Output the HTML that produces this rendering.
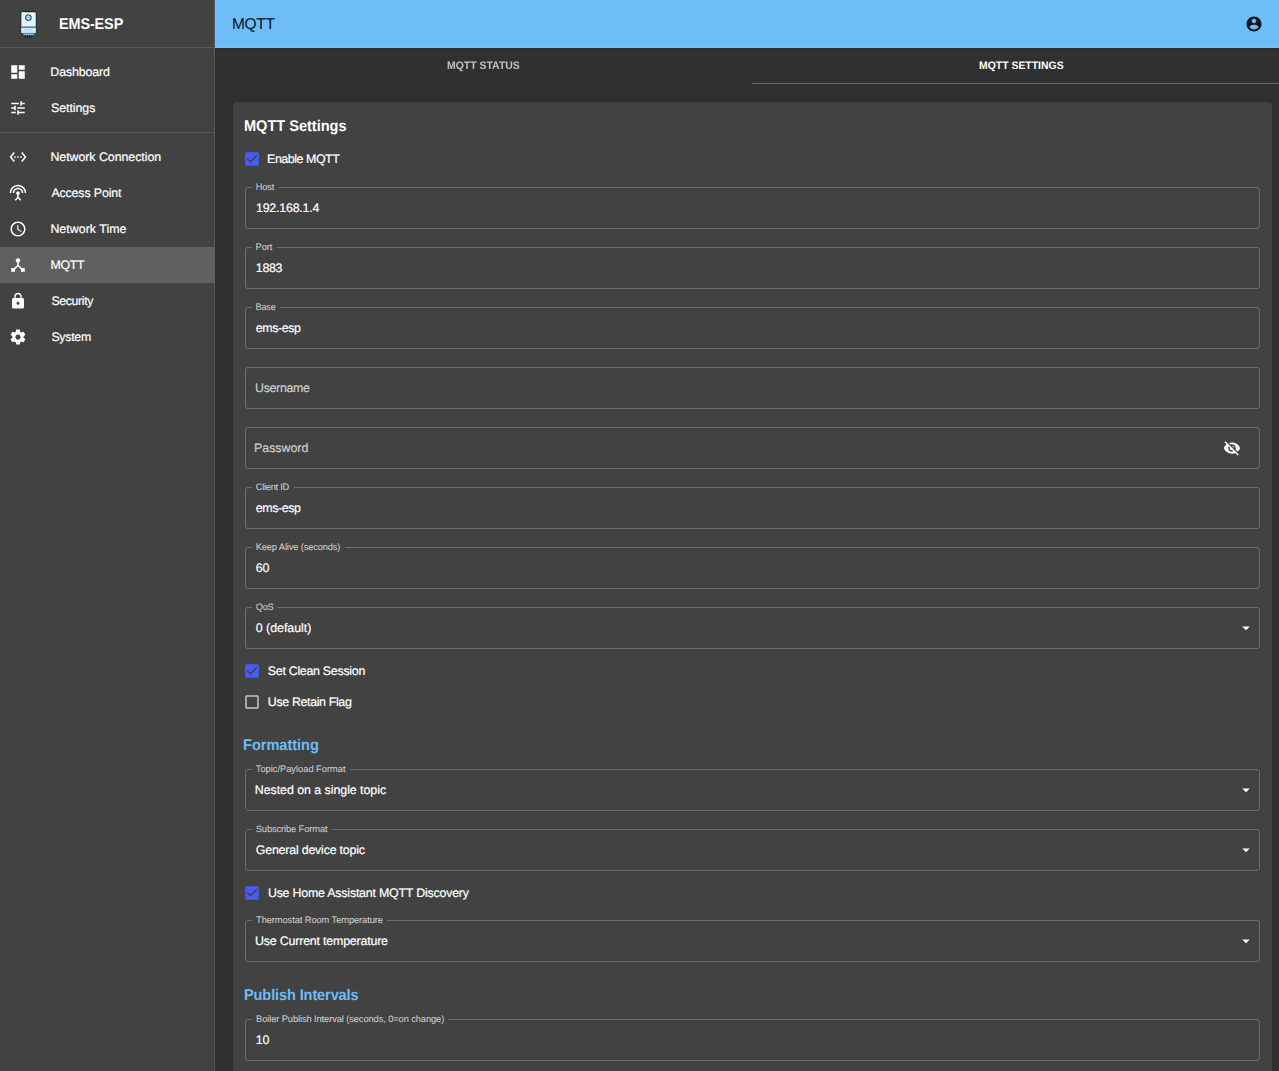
<!DOCTYPE html>
<html><head><meta charset="utf-8"><title>EMS-ESP MQTT</title>
<style>
html,body{margin:0;padding:0;}
body{width:1279px;height:1071px;overflow:hidden;position:relative;background:#303030;font-family:"Liberation Sans", sans-serif;}
.abs{position:absolute;}
.t{position:absolute;white-space:nowrap;line-height:1;text-rendering:geometricPrecision;}
.ic{position:absolute;display:block;}
.ol{position:absolute;left:245px;width:1015px;height:42px;box-sizing:border-box;border:1px solid #6d6d6d;border-radius:3px;}
.notch{position:absolute;top:-2px;height:4px;background:#424242;}
</style></head><body>

<div class="abs" style="left:0;top:0;width:214px;height:1071px;background:#424242;border-right:1px solid #595959;"></div>
<div class="abs" style="left:0;top:47px;width:214px;height:1px;background:#595959;"></div>
<div class="abs" style="left:0;top:132px;width:214px;height:1px;background:#595959;"></div>
<div class="abs" style="left:0;top:247px;width:215px;height:36px;background:#606060;"></div>
<svg class="abs" style="left:19px;top:10px;width:20px;height:30px" viewBox="0 0 20 30">
<path d="M1.8 3.2 Q1.8 1.6 3.5 1.5 L5.5 1.2 L6.5 1.6 L15.6 1.6 Q17.3 1.6 17.3 3.2 L17.3 22 Q17.3 23.6 15.6 23.6 L3.5 23.6 Q1.8 23.6 1.8 22 Z" fill="#e1f5fe" stroke="#1c252b" stroke-width="1.1"/>
<rect x="2.3" y="17.4" width="14.5" height="5.7" fill="#c6ecfc"/>
<line x1="1.8" y1="17.1" x2="17.3" y2="17.1" stroke="#1c252b" stroke-width="0.9"/>
<circle cx="9.4" cy="7.7" r="2.9" fill="#8cc3e6" stroke="#1c252b" stroke-width="0.9"/>
<path d="M10.6 7.0 A1.3 1.3 0 1 0 10.6 8.4 L9.6 8.4" fill="none" stroke="#e1f5fe" stroke-width="0.6"/>
<rect x="5.8" y="19.4" width="0.8" height="1.2" fill="#9ab"/><rect x="9.0" y="19.4" width="0.8" height="1.2" fill="#9ab"/><rect x="12.2" y="19.4" width="0.8" height="1.2" fill="#9ab"/>
<path d="M4 23.2 L15.5 23.2 Q15.5 25.2 13.5 25.2 L6 25.2 Q4 25.2 4 23.2Z" fill="#8cbfd8" stroke="#4f7f99" stroke-width="0.5"/>
<rect x="5.8" y="25.3" width="0.9" height="2.6" fill="#111"/><rect x="8.0" y="25.3" width="0.9" height="2.6" fill="#111"/><rect x="10.2" y="25.3" width="0.9" height="2.6" fill="#111"/><rect x="12.3" y="25.3" width="0.9" height="2.6" fill="#111"/>
</svg>
<div class="abs" style="left:215px;top:0;width:1064px;height:48px;background:#6ebcf8;"></div>
<div class="abs" style="left:215px;top:47px;width:1064px;height:1px;background:#71c3fc;"></div>
<div class="abs" style="left:215px;top:48px;width:1064px;height:1px;background:#2c2a28;"></div>
<div class="abs" style="left:752px;top:82.75px;width:538px;height:1.5px;background:#4a5af5;"></div>
<div class="abs" style="left:233px;top:102px;width:1039px;height:1100px;background:#424242;border-radius:3px;box-shadow:0 0 1.5px rgba(0,0,0,0.35);"></div>
<div class="ol" style="top:187.00px"><div class="notch" style="left:5.80px;width:27.20px"></div></div>
<div class="ol" style="top:247.00px"><div class="notch" style="left:5.80px;width:25.20px"></div></div>
<div class="ol" style="top:307.00px"><div class="notch" style="left:5.80px;width:28.30px"></div></div>
<div class="ol" style="top:367.00px"></div>
<div class="ol" style="top:427.00px"></div>
<div class="ol" style="top:487.00px"><div class="notch" style="left:5.80px;width:42.10px"></div></div>
<div class="ol" style="top:547.00px"><div class="notch" style="left:5.80px;width:93.40px"></div></div>
<div class="ol" style="top:607.00px"><div class="notch" style="left:5.80px;width:24.90px"></div></div>
<div class="ol" style="top:769.00px"><div class="notch" style="left:5.80px;width:98.50px"></div></div>
<div class="ol" style="top:829.00px"><div class="notch" style="left:5.80px;width:80.50px"></div></div>
<div class="ol" style="top:920.00px"><div class="notch" style="left:5.80px;width:135.50px"></div></div>
<div class="ol" style="top:1019.00px"><div class="notch" style="left:5.80px;width:196.70px"></div></div>
<svg class="ic" style="left:9px;top:63px;width:18px;height:18px" viewBox="0 0 24 24"><path fill="#fff" d="M3 13h8V3H3v10zm0 8h8v-6H3v6zm10 0h8V11h-8v10zm0-18v6h8V3h-8z"/></svg>
<svg class="ic" style="left:9px;top:99px;width:18px;height:18px" viewBox="0 0 24 24"><path fill="#fff" d="M3 17v2h6v-2H3zM3 5v2h10V5H3zm10 16v-2h8v-2h-8v-2h-2v6h2zM7 9v2H3v2h4v2h2V9H7zm14 4v-2H11v2h10zm-6-4h2V7h4V5h-4V3h-2v6z"/></svg>
<svg class="ic" style="left:9px;top:148px;width:18px;height:18px" viewBox="0 0 24 24"><path fill="#fff" d="M7.77 6.76L6.23 5.48.82 12l5.41 6.52 1.54-1.28L3.42 12l4.35-5.24zM7 13h2v-2H7v2zm10-2h-2v2h2v-2zm-6 2h2v-2h-2v2zm6.77-7.52l-1.54 1.28L20.58 12l-4.35 5.24 1.54 1.28L23.18 12l-5.41-6.52z"/></svg>
<svg class="ic" style="left:9px;top:184px;width:18px;height:18px" viewBox="0 0 24 24"><path fill="#fff" d="M12 5c-3.87 0-7 3.13-7 7h2c0-2.76 2.24-5 5-5s5 2.24 5 5h2c0-3.87-3.13-7-7-7zm1 9.29c.88-.39 1.5-1.26 1.5-2.29 0-1.38-1.12-2.5-2.5-2.5S9.5 10.62 9.5 12c0 1.02.62 1.9 1.5 2.29v3.3L7.59 21 9 22.41l3-3 3 3L16.41 21 13 17.59v-3.3zM12 1C5.93 1 1 5.93 1 12h2c0-4.97 4.03-9 9-9s9 4.03 9 9h2c0-6.07-4.93-11-11-11z"/></svg>
<svg class="ic" style="left:9px;top:220px;width:18px;height:18px" viewBox="0 0 24 24"><path fill="#fff" d="M11.99 2C6.47 2 2 6.48 2 12s4.47 10 9.99 10C17.52 22 22 17.52 22 12S17.52 2 11.99 2zM12 20c-4.42 0-8-3.58-8-8s3.58-8 8-8 8 3.58 8 8-3.58 8-8 8zm.5-13H11v6l5.25 3.15.75-1.23-4.5-2.67z"/></svg>
<svg class="ic" style="left:9px;top:256px;width:18px;height:18px" viewBox="0 0 24 24"><path fill="#fff" d="M17 16l-4-4V8.82C14.16 8.4 15 7.3 15 6c0-1.66-1.34-3-3-3S9 4.34 9 6c0 1.3.84 2.4 2 2.82V12l-4 4H3v5h5v-3.05l4-4.2 4 4.2V21h5v-5h-4z"/></svg>
<svg class="ic" style="left:9px;top:292px;width:18px;height:18px" viewBox="0 0 24 24"><path fill="#fff" d="M18 8h-1V6c0-2.76-2.24-5-5-5S7 3.24 7 6v2H6c-1.1 0-2 .9-2 2v10c0 1.1.9 2 2 2h12c1.1 0 2-.9 2-2V10c0-1.1-.9-2-2-2zm-6 9c-1.1 0-2-.9-2-2s.9-2 2-2 2 .9 2 2-.9 2-2 2zm3.1-9H8.9V6c0-1.71 1.39-3.1 3.1-3.1 1.71 0 3.1 1.39 3.1 3.1v2z"/></svg>
<svg class="ic" style="left:9px;top:328px;width:18px;height:18px" viewBox="0 0 24 24"><path fill="#fff" d="M19.43 12.98c.04-.32.07-.64.07-.98s-.03-.66-.07-.98l2.11-1.65c.19-.15.24-.42.12-.64l-2-3.46c-.12-.22-.39-.3-.61-.22l-2.49 1c-.52-.4-1.08-.73-1.69-.98l-.38-2.65C14.46 2.18 14.25 2 14 2h-4c-.25 0-.46.18-.49.42l-.38 2.65c-.61.25-1.17.59-1.69.98l-2.49-1c-.23-.09-.49 0-.61.22l-2 3.46c-.13.22-.07.49.12.64l2.11 1.65c-.04.32-.07.65-.07.98s.03.66.07.98l-2.11 1.65c-.19.15-.24.42-.12.64l2 3.46c.12.22.39.3.61.22l2.49-1c.52.4 1.08.73 1.69.98l.38 2.65c.03.24.24.42.49.42h4c.25 0 .46-.18.49-.42l.38-2.65c.61-.25 1.17-.59 1.69-.98l2.49 1c.23.09.49 0 .61-.22l2-3.46c.12-.22.07-.49-.12-.64l-2.11-1.65zM12 15.5c-1.93 0-3.5-1.57-3.5-3.5s1.57-3.5 3.5-3.5 3.5 1.57 3.5 3.5-1.57 3.5-3.5 3.5z"/></svg>
<svg class="ic" style="left:1245px;top:14.8px;width:18px;height:18px" viewBox="0 0 24 24"><path fill="rgba(0,0,0,0.87)" d="M12 2C6.48 2 2 6.48 2 12s4.48 10 10 10 10-4.48 10-10S17.52 2 12 2zm0 3c1.66 0 3 1.34 3 3s-1.34 3-3 3-3-1.34-3-3 1.34-3 3-3zm0 14.2c-2.5 0-4.71-1.28-6-3.22.03-1.99 4-3.08 6-3.08 1.99 0 5.97 1.09 6 3.08-1.29 1.94-3.5 3.22-6 3.22z"/></svg>
<svg class="ic" style="left:1223.2px;top:438.6px;width:18px;height:18px" viewBox="0 0 24 24"><path fill="#fff" d="M12 7c2.76 0 5 2.24 5 5 0 .65-.13 1.26-.36 1.83l2.92 2.92c1.51-1.26 2.7-2.89 3.43-4.75-1.73-4.39-6-7.5-11-7.5-1.4 0-2.74.25-3.98.7l2.16 2.16C10.74 7.13 11.35 7 12 7zM2 4.27l2.28 2.28.46.46C3.08 8.3 1.78 10.02 1 12c1.73 4.39 6 7.5 11 7.5 1.55 0 3.03-.3 4.38-.84l.42.42L19.73 22 21 20.73 3.27 3 2 4.27zM7.53 9.8l1.55 1.55c-.05.21-.08.43-.08.65 0 1.66 1.34 3 3 3 .22 0 .44-.03.65-.08l1.55 1.55c-.67.33-1.41.53-2.2.53-2.76 0-5-2.24-5-5 0-.79.2-1.53.53-2.2zm4.31-.78l3.15 3.15.02-.16c0-1.66-1.34-3-3-3l-.17.01z"/></svg>
<svg class="ic" style="left:1236.75px;top:619px;width:18px;height:18px" viewBox="0 0 24 24"><path fill="#fff" d="M7 10l5 5 5-5z"/></svg>
<svg class="ic" style="left:1236.75px;top:781px;width:18px;height:18px" viewBox="0 0 24 24"><path fill="#fff" d="M7 10l5 5 5-5z"/></svg>
<svg class="ic" style="left:1236.75px;top:841px;width:18px;height:18px" viewBox="0 0 24 24"><path fill="#fff" d="M7 10l5 5 5-5z"/></svg>
<svg class="ic" style="left:1236.75px;top:932px;width:18px;height:18px" viewBox="0 0 24 24"><path fill="#fff" d="M7 10l5 5 5-5z"/></svg>
<svg class="ic" style="left:242.75px;top:149.9px;width:18px;height:18px" viewBox="0 0 24 24"><path fill="#4a5af5" d="M19 3H5c-1.11 0-2 .9-2 2v14c0 1.1.89 2 2 2h14c1.11 0 2-.9 2-2V5c0-1.1-.89-2-2-2zm-9 14l-5-5 1.41-1.41L10 14.17l7.59-7.59L19 8l-9 9z"/></svg>
<svg class="ic" style="left:242.75px;top:662px;width:18px;height:18px" viewBox="0 0 24 24"><path fill="#4a5af5" d="M19 3H5c-1.11 0-2 .9-2 2v14c0 1.1.89 2 2 2h14c1.11 0 2-.9 2-2V5c0-1.1-.89-2-2-2zm-9 14l-5-5 1.41-1.41L10 14.17l7.59-7.59L19 8l-9 9z"/></svg>
<svg class="ic" style="left:242.75px;top:693px;width:18px;height:18px" viewBox="0 0 24 24"><path fill="rgba(255,255,255,0.7)" d="M19 5v14H5V5h14m0-2H5c-1.1 0-2 .9-2 2v14c0 1.1.9 2 2 2h14c1.1 0 2-.9 2-2V5c0-1.1-.9-2-2-2z"/></svg>
<svg class="ic" style="left:242.75px;top:884.1px;width:18px;height:18px" viewBox="0 0 24 24"><path fill="#4a5af5" d="M19 3H5c-1.11 0-2 .9-2 2v14c0 1.1.89 2 2 2h14c1.11 0 2-.9 2-2V5c0-1.1-.89-2-2-2zm-9 14l-5-5 1.41-1.41L10 14.17l7.59-7.59L19 8l-9 9z"/></svg>
<div class="t" style="left:59.37px;top:17px;font-size:15.5px;color:#ffffff;font-weight:700;letter-spacing:-0.114px;transform:scale(0.93,1.0);transform-origin:0 12px;" id="ems">EMS-ESP</div>
<div class="t" style="left:50.35px;top:66px;font-size:12.4px;color:#ffffff;font-weight:400;letter-spacing:-0.147px;-webkit-text-stroke:0.2px #ffffff;" id="side0">Dashboard</div>
<div class="t" style="left:51.00px;top:102px;font-size:12.4px;color:#ffffff;font-weight:400;letter-spacing:-0.054px;-webkit-text-stroke:0.2px #ffffff;" id="side1">Settings</div>
<div class="t" style="left:50.40px;top:151px;font-size:12.4px;color:#ffffff;font-weight:400;letter-spacing:-0.046px;-webkit-text-stroke:0.2px #ffffff;" id="side2">Network Connection</div>
<div class="t" style="left:51.40px;top:187px;font-size:12.4px;color:#ffffff;font-weight:400;letter-spacing:-0.144px;-webkit-text-stroke:0.2px #ffffff;" id="side3">Access Point</div>
<div class="t" style="left:50.40px;top:223px;font-size:12.4px;color:#ffffff;font-weight:400;letter-spacing:0.030px;-webkit-text-stroke:0.2px #ffffff;" id="side4">Network Time</div>
<div class="t" style="left:50.40px;top:259px;font-size:12.4px;color:#ffffff;font-weight:400;letter-spacing:-0.300px;-webkit-text-stroke:0.2px #ffffff;" id="side5">MQTT</div>
<div class="t" style="left:51.40px;top:295px;font-size:12.4px;color:#ffffff;font-weight:400;letter-spacing:-0.380px;-webkit-text-stroke:0.2px #ffffff;" id="side6">Security</div>
<div class="t" style="left:51.40px;top:331px;font-size:12.4px;color:#ffffff;font-weight:400;letter-spacing:-0.298px;-webkit-text-stroke:0.2px #ffffff;" id="side7">System</div>
<div class="t" style="left:231.97px;top:17px;font-size:15.5px;color:rgba(0,0,0,0.87);font-weight:400;letter-spacing:-0.300px;-webkit-text-stroke:0.15px rgba(0,0,0,0.87);" id="apptitle">MQTT</div>
<div class="t" style="left:447.00px;top:61px;font-size:10.85px;color:#ffffff;font-weight:700;letter-spacing:-0.003px;opacity:0.7;will-change:opacity;transform:scale(0.965,1.0);transform-origin:0 8px;" id="tab1">MQTT STATUS</div>
<div class="t" style="left:979.00px;top:61px;font-size:10.85px;color:#ffffff;font-weight:700;letter-spacing:-0.022px;transform:scale(0.965,1.0);transform-origin:0 8px;" id="tab2">MQTT SETTINGS</div>
<div class="t" style="left:243.76px;top:119px;font-size:15.5px;color:#ffffff;font-weight:700;letter-spacing:-0.024px;transform:scale(0.94,1.0);transform-origin:0 12px;" id="title">MQTT Settings</div>
<div class="t" style="left:267.10px;top:153px;font-size:12.4px;color:#ffffff;font-weight:400;letter-spacing:-0.445px;-webkit-text-stroke:0.2px #ffffff;" id="cb1">Enable MQTT</div>
<div class="t" style="left:255.75px;top:183px;font-size:9.3px;color:rgba(255,255,255,0.7);font-weight:400;letter-spacing:-0.211px;-webkit-text-stroke:0.1px rgba(255,255,255,0.7);" id="lab0">Host</div>
<div class="t" style="left:256.00px;top:202px;font-size:12.4px;color:#ffffff;font-weight:400;letter-spacing:-0.207px;-webkit-text-stroke:0.2px #ffffff;" id="val0">192.168.1.4</div>
<div class="t" style="left:255.55px;top:243px;font-size:9.3px;color:rgba(255,255,255,0.7);font-weight:400;letter-spacing:-0.122px;-webkit-text-stroke:0.1px rgba(255,255,255,0.7);" id="lab1">Port</div>
<div class="t" style="left:255.80px;top:262px;font-size:12.4px;color:#ffffff;font-weight:400;letter-spacing:-0.300px;-webkit-text-stroke:0.2px #ffffff;" id="val1">1883</div>
<div class="t" style="left:255.55px;top:303px;font-size:9.3px;color:rgba(255,255,255,0.7);font-weight:400;letter-spacing:-0.273px;-webkit-text-stroke:0.1px rgba(255,255,255,0.7);" id="lab2">Base</div>
<div class="t" style="left:255.80px;top:322px;font-size:12.4px;color:#ffffff;font-weight:400;letter-spacing:-0.403px;-webkit-text-stroke:0.2px #ffffff;" id="val2">ems-esp</div>
<div class="t" style="left:255.00px;top:382px;font-size:12.4px;color:rgba(255,255,255,0.7);font-weight:400;letter-spacing:-0.309px;-webkit-text-stroke:0.2px rgba(255,255,255,0.7);" id="val3">Username</div>
<div class="t" style="left:254.10px;top:442px;font-size:12.4px;color:rgba(255,255,255,0.7);font-weight:400;letter-spacing:-0.030px;-webkit-text-stroke:0.2px rgba(255,255,255,0.7);" id="val4">Password</div>
<div class="t" style="left:255.75px;top:483px;font-size:9.3px;color:rgba(255,255,255,0.7);font-weight:400;letter-spacing:-0.267px;-webkit-text-stroke:0.1px rgba(255,255,255,0.7);" id="lab5">Client ID</div>
<div class="t" style="left:255.80px;top:502px;font-size:12.4px;color:#ffffff;font-weight:400;letter-spacing:-0.403px;-webkit-text-stroke:0.2px #ffffff;" id="val5">ems-esp</div>
<div class="t" style="left:255.75px;top:543px;font-size:9.3px;color:rgba(255,255,255,0.7);font-weight:400;letter-spacing:-0.140px;-webkit-text-stroke:0.1px rgba(255,255,255,0.7);" id="lab6">Keep Alive (seconds)</div>
<div class="t" style="left:255.80px;top:562px;font-size:12.4px;color:#ffffff;font-weight:400;letter-spacing:-0.300px;-webkit-text-stroke:0.2px #ffffff;" id="val6">60</div>
<div class="t" style="left:255.75px;top:603px;font-size:9.3px;color:rgba(255,255,255,0.7);font-weight:400;letter-spacing:-0.300px;-webkit-text-stroke:0.1px rgba(255,255,255,0.7);" id="lab7">QoS</div>
<div class="t" style="left:255.80px;top:622px;font-size:12.4px;color:#ffffff;font-weight:400;letter-spacing:-0.026px;-webkit-text-stroke:0.2px #ffffff;" id="val7">0 (default)</div>
<div class="t" style="left:255.75px;top:765px;font-size:9.3px;color:rgba(255,255,255,0.7);font-weight:400;letter-spacing:-0.007px;-webkit-text-stroke:0.1px rgba(255,255,255,0.7);" id="lab8">Topic/Payload Format</div>
<div class="t" style="left:254.80px;top:784px;font-size:12.4px;color:#ffffff;font-weight:400;letter-spacing:-0.041px;-webkit-text-stroke:0.2px #ffffff;" id="val8">Nested on a single topic</div>
<div class="t" style="left:255.75px;top:825px;font-size:9.3px;color:rgba(255,255,255,0.7);font-weight:400;letter-spacing:-0.106px;-webkit-text-stroke:0.1px rgba(255,255,255,0.7);" id="lab9">Subscribe Format</div>
<div class="t" style="left:255.80px;top:844px;font-size:12.4px;color:#ffffff;font-weight:400;letter-spacing:-0.198px;-webkit-text-stroke:0.2px #ffffff;" id="val9">General device topic</div>
<div class="t" style="left:256.05px;top:916px;font-size:9.3px;color:rgba(255,255,255,0.7);font-weight:400;letter-spacing:-0.081px;-webkit-text-stroke:0.1px rgba(255,255,255,0.7);" id="lab10">Thermostat Room Temperature</div>
<div class="t" style="left:255.10px;top:935px;font-size:12.4px;color:#ffffff;font-weight:400;letter-spacing:-0.189px;-webkit-text-stroke:0.2px #ffffff;" id="val10">Use Current temperature</div>
<div class="t" style="left:256.05px;top:1015px;font-size:9.3px;color:rgba(255,255,255,0.7);font-weight:400;letter-spacing:-0.096px;-webkit-text-stroke:0.1px rgba(255,255,255,0.7);" id="lab11">Boiler Publish Interval (seconds, 0=on change)</div>
<div class="t" style="left:255.80px;top:1034px;font-size:12.4px;color:#ffffff;font-weight:400;letter-spacing:-0.300px;-webkit-text-stroke:0.2px #ffffff;" id="val11">10</div>
<div class="t" style="left:267.80px;top:665px;font-size:12.4px;color:#ffffff;font-weight:400;letter-spacing:-0.278px;-webkit-text-stroke:0.2px #ffffff;" id="cb2">Set Clean Session</div>
<div class="t" style="left:267.80px;top:696px;font-size:12.4px;color:#ffffff;font-weight:400;letter-spacing:-0.346px;-webkit-text-stroke:0.2px #ffffff;" id="cb3">Use Retain Flag</div>
<div class="t" style="left:243.46px;top:738px;font-size:15.5px;color:#6ebcf8;font-weight:700;letter-spacing:-0.024px;transform:scale(0.94,1.0);transform-origin:0 12px;" id="h1">Formatting</div>
<div class="t" style="left:267.90px;top:887px;font-size:12.4px;color:#ffffff;font-weight:400;letter-spacing:-0.207px;-webkit-text-stroke:0.2px #ffffff;" id="cb4">Use Home Assistant MQTT Discovery</div>
<div class="t" style="left:243.76px;top:988px;font-size:15.5px;color:#6ebcf8;font-weight:700;letter-spacing:-0.131px;transform:scale(0.94,1.0);transform-origin:0 12px;" id="h2">Publish Intervals</div>
</body></html>
